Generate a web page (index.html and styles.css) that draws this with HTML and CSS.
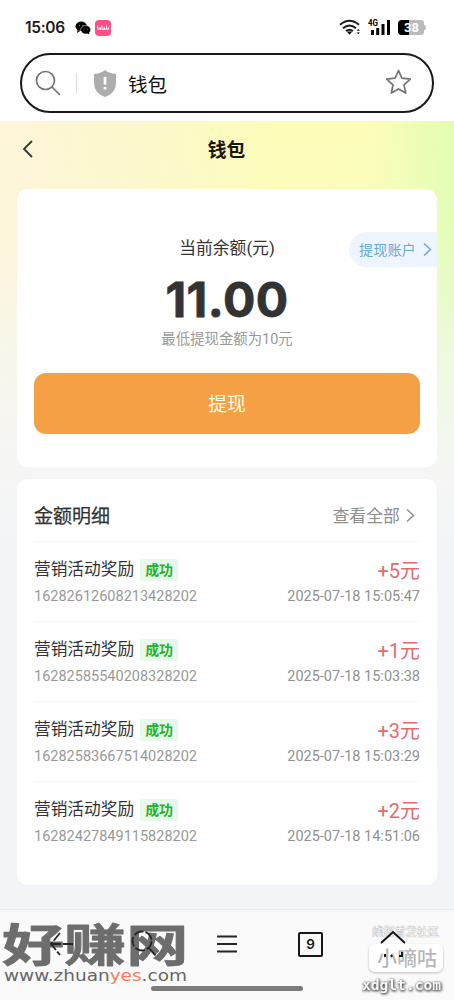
FILE: index.html
```html
<!DOCTYPE html>
<html lang="zh-CN">
<head>
<meta charset="utf-8">
<title>钱包</title>
<link rel="stylesheet" href="styles.css">
</head>
<body>
<div class="phone">
  <header class="browser">
    <div class="status">
      <span class="clock">15:06</span>
      <svg class="wechat" width="16" height="14" viewBox="0 0 16 14"><ellipse cx="6.2" cy="5.3" rx="5.7" ry="4.8"/><path d="M2.5 9L2 12l3-2z"/><ellipse cx="10.7" cy="8.8" rx="5" ry="4.2" stroke="#fff" stroke-width=".5"/><path d="M12 12l2 1.6.2-3z"/><g fill="#aaa"><circle cx="4.4" cy="4.3" r=".6"/><circle cx="8" cy="4.3" r=".6"/><circle cx="9" cy="8" r=".5"/><circle cx="12.3" cy="8" r=".5"/></g></svg>
      <span class="app"><svg width="12" height="6" viewBox="0 0 12 6"><path d="M.7.5v3.700h2.300V2.500v1.700h1.500M5 .5v3.700h2.300V2.500v1.700h1.500M9.500 .5v3.700h2V2.400"/></svg></span>
      <div class="signals">
        <svg width="22" height="17" viewBox="0 0 22 17"><g fill="none" stroke="#1b1b1b" stroke-width="1.9"><path d="M1 5.8Q10.500-2.200 20 5.800M4 9.200Q10.500 3.600 17 9.200M7 12Q10.500 9.300 14 12"/></g><path d="M7.700 12.600h5.600l-2.800 3.200z"/><path d="M17.800 11.700l1.500-1.700 1.500 1.700zM17.800 13.500l1.500 1.700 1.500-1.700z"/></svg>
        <svg class="bars" width="23" height="17" viewBox="0 0 23 17"><text x="0" y="7" textLength="10" lengthAdjust="spacingAndGlyphs">4G</text><path d="M3 11h3v5H3zM8.200 9h3v7h-3zM13.500 5h3v11h-3zM19 1h3v15h-3z"/></svg>
        <svg class="battery" width="28" height="15" viewBox="0 0 28 15"><path d="M4 0h19q3 0 3 3v1.500q2 1 2 3t-2 3V12q0 3-3 3H4q-4 0-4-4V4q0-4 4-4" fill="#bbb"/><path d="M4 0h7v15H4q-4 0-4-4V4q0-4 4-4" fill="#000"/><text x="6" y="12.200" textLength="15">38</text></svg>
      </div>
    </div>
    <div class="address">
      <svg class="glass" width="27" height="27" viewBox="0 0 27 27"><circle cx="10.500" cy="10.500" r="9"/><path d="M17 17l8 8"/></svg>
      <i class="sep"></i>
      <svg class="shield" width="24" height="27" viewBox="0 0 24 27"><path d="M12 0Q16 3.500 23 4v9q0 10-11 14Q1 23 1 13V4Q8 3.500 12 0" fill="#adadad"/><path d="M12 7v7.500M12 17v2.500" stroke="#fff" stroke-width="2.700"/></svg>
      <span class="site">钱包</span>
      <svg class="star" width="27" height="26" viewBox="0 0 27 26"><path d="M13.500 1.500l3.400 7.700 8.400.9-6.300 5.700 1.700 8.300-7.200-4.200-7.200 4.200L8 15.800 1.700 10.100l8.400-.9z"/></svg>
    </div>
  </header>

  <main class="wallet">
    <div class="titlebar">
      <svg class="back" width="12" height="20" viewBox="0 0 12 20"><path d="M10 2L2 10l8 8"/></svg>
      <h1>钱包</h1>
    </div>
    <section class="card balance">
      <div class="label">当前余额(元)</div>
      <a class="account"><span>提现账户</span><svg width="9" height="15" viewBox="0 0 9 15"><path d="M1 1.500l6.500 6L1 13.500"/></svg></a>
      <div class="amount">11.00</div>
      <div class="minimum">最低提现金额为10元</div>
      <button class="withdraw">提现</button>
    </section>
    <section class="card details">
      <div class="heading"><h2>金额明细</h2><a class="more"><span>查看全部</span><svg width="9" height="15" viewBox="0 0 9 15"><path d="M1 1.500l6.500 6L1 13.500"/></svg></a></div>
      <div class="entry">
        <div class="line"><span class="name">营销活动奖励</span><b class="tag">成功</b><span class="sum">+5元</span></div>
        <div class="meta"><span>16282612608213428202</span><time>2025-07-18 15:05:47</time></div>
      </div>
      <div class="entry">
        <div class="line"><span class="name">营销活动奖励</span><b class="tag">成功</b><span class="sum">+1元</span></div>
        <div class="meta"><span>16282585540208328202</span><time>2025-07-18 15:03:38</time></div>
      </div>
      <div class="entry">
        <div class="line"><span class="name">营销活动奖励</span><b class="tag">成功</b><span class="sum">+3元</span></div>
        <div class="meta"><span>16282583667514028202</span><time>2025-07-18 15:03:29</time></div>
      </div>
      <div class="entry">
        <div class="line"><span class="name">营销活动奖励</span><b class="tag">成功</b><span class="sum">+2元</span></div>
        <div class="meta"><span>16282427849115828202</span><time>2025-07-18 14:51:06</time></div>
      </div>
    </section>
  </main>

  <nav class="toolbar">
    <div class="slot"></div>
    <div class="slot"></div>
    <div class="slot"><svg width="20" height="18" viewBox="0 0 20 18"><path d="M0 1.500h20M0 9h20M0 16.500h20"/></svg></div>
    <div class="slot"><span class="tabs">9</span></div>
    <div class="slot"></div>
    <i class="homebar"></i>
    <svg class="mark-left" width="192" height="66" viewBox="0 0 192 66">
      <text class="cn" transform="translate(2 41) scale(1.350 .98)" textLength="138" lengthAdjust="spacingAndGlyphs">好赚网</text>
      <text class="url" x="4" y="60" textLength="183" lengthAdjust="spacingAndGlyphs">www.zhuan<tspan>yes</tspan>.com</text>
      <g class="tools"><path d="M51 23h23M60 12L51 23l9 11M149 27l7 8"/><circle cx="142" cy="20" r="9.500"/></g>
    </svg>
    <svg class="mark-right" width="94" height="76" viewBox="0 0 94 76">
      <text class="community" x="12" y="19" textLength="67">线报首发社区</text>
      <path class="roof" d="M21 26L33 15l12 11"/>
      <rect x="9" y="27" width="74" height="28" rx="6"/>
      <text class="xdg" x="17" y="49" textLength="60">小嘀咕</text>
      <path class="roof" d="M25 37v3M31 38l1 2M42 35v4h-3"/>
      <text class="domain" x="2" y="73" textLength="79" lengthAdjust="spacingAndGlyphs">xdglt.com</text>
    </svg>
  </nav>
</div>
</body>
</html>
```
FILE: styles.css
```css
* { box-sizing: border-box; }
body { margin: 0; font-family: Roboto, "Noto Sans CJK SC", sans-serif; color: #333; }
.phone { width: 454px; height: 1000px; display: flex; flex-direction: column; overflow: hidden; background: #f3f4f7; }
svg { display: block; flex: none; }

.browser { height: 121px; background: #fefefe; flex: none; }
.status { height: 53px; padding: 2px 28px 0 25px; display: flex; align-items: center; }
.clock { font: 600 15.500px Inter, sans-serif; color: #1b1b1b; width: 50px; letter-spacing: -.3px; }
.app { width: 16px; height: 16px; margin-left: 4px; border-radius: 4px; background: #ff4f87; display: grid; place-items: center; }
.app path { fill: none; stroke: #fff; stroke-width: 1; }
.signals { margin-left: auto; display: flex; align-items: center; }
.signals > svg:first-child { margin-right: 2px; }
.bars { margin: 0 7px 0 5px; overflow: visible; }
.bars text { font: 700 9px Roboto, sans-serif; }
.battery text { font: 700 13px Roboto, sans-serif; fill: #fff; }
.address { width: 414px; height: 60px; margin-left: 20px; border: 2px solid #191919; border-radius: 30px; display: flex; align-items: center; padding: 0 20px 0 13px; }
.glass, .star { fill: none; stroke: #737373; stroke-width: 1.700; stroke-linejoin: round; }
.sep { width: 1px; height: 21px; background: #ddd; margin: 0 16px 0 14px; }
.site { font-size: 19.500px; color: #111; margin-left: 11px; }
.star { margin-left: auto; transform: translateY(-1px); }

.wallet { flex: 1; padding: 0 17px; background: linear-gradient(to bottom, rgba(245,246,244,0) 0, rgba(245,246,244,.1) 110px, rgba(245,246,244,.65) 230px, #f5f6f4 345px, #f3f4f7 440px), linear-gradient(92deg, #fff5d9 0%, #fcf8cb 30%, #fdfdb8 58%, #fbfdb9 78%, #dffeb0 96%); }
.titlebar { height: 68px; display: grid; grid-template-columns: 60px 1fr 60px; align-items: center; padding: 0 0 12px 5px; }
.back { fill: none; stroke: #333; stroke-width: 1.800; }
h1 { margin: 0; text-align: center; font-size: 18.800px; color: #17170d; transform: translate(-3px, -1px); }
.card { background: #fff; border-radius: 11px; }
.balance { height: 278px; padding: 47px 17px 0; display: flex; flex-direction: column; align-items: center; position: relative; }
.label { font-size: 16.800px; line-height: 25px; }
.account { position: absolute; right: 0; top: 43px; width: 88px; height: 35px; border-radius: 18px 0 0 18px; background: #eff5ff; color: #65a9d7; font-size: 14.200px; display: flex; align-items: center; justify-content: space-between; padding: 0 5px 0 10px; }
.account span, .more span { transform: translateY(-1px); }
.account svg, .more svg { fill: none; stroke: currentColor; stroke-width: 1.500; }
.amount { font: 700 48px/58px Inter, sans-serif; letter-spacing: .5px; margin-top: 10px; -webkit-text-stroke: .8px #333; }
.minimum { font-size: 14.400px; color: #999; line-height: 21px; }
.withdraw { align-self: stretch; height: 61px; margin-top: 23px; padding: 0 0 3px; border: 0; border-radius: 12px; background: #f5a045; color: #fffdec; font: 18.800px Roboto, "Noto Sans CJK SC", sans-serif; }
.details { height: 406px; margin-top: 12px; padding: 0 17px; }
.heading { height: 62px; padding-top: 10px; display: flex; align-items: center; justify-content: space-between; }
h2 { margin: 0; font-size: 19px; font-weight: 400; -webkit-text-stroke: .25px #333; transform: translateY(-1px); }
.more { display: flex; align-items: center; gap: 6px; padding-right: 5px; color: #8e8e8e; font-size: 16.900px; }
.entry { height: 80px; border-top: 1px solid #f7f7f7; padding-top: 14px; }
.line { height: 28px; display: flex; align-items: center; }
.name { font-size: 16.700px; line-height: 25px; transform: translateY(-1px); }
.tag { width: 38px; height: 22px; margin-left: 6px; background: #e9f8ed; color: #20b52a; font-size: 14px; line-height: 22px; text-align: center; border-radius: 2px; }
.sum { margin-left: auto; font-size: 20px; color: #e36c6e; transform: translateY(-1px); }
.meta { display: flex; justify-content: space-between; color: #999; font-size: 14.500px; line-height: 25px; }
.meta time { color: #919191; }

.toolbar { position: relative; height: 91px; flex: none; background: #fafafb; border-top: 1px solid #e8e9ec; display: grid; grid-template-columns: repeat(5, 83.500px); justify-content: center; padding: 21px 0 0; }
.slot { height: 26px; display: grid; place-items: center; fill: none; stroke: #252525; stroke-width: 2; }
.tabs { width: 25px; height: 25px; border: 2px solid #171717; border-radius: 2px; text-align: center; font: 600 13.500px/21px Inter, sans-serif; color: #171717; }
.homebar { position: absolute; left: 151px; top: 76px; width: 152px; height: 5px; border-radius: 3px; background: #7b7b7b; }
.mark-left { position: absolute; left: 0; top: 11px; overflow: visible; }
.cn { font: 700 46px "Noto Sans CJK SC", sans-serif; fill: #6d6d6d; stroke: #6d6d6d; stroke-width: .8; stroke-linejoin: round; }
.url { font: 16.500px "DejaVu Sans", sans-serif; fill: #666; }
.url tspan { fill: #ff7958; }
.tools { fill: none; stroke: #252525; stroke-width: 1.800; stroke-dasharray: 10 2; }
.mark-right { position: absolute; left: 360px; top: 7px; overflow: visible; }
.mark-right rect { fill: #fff; filter: drop-shadow(0 1px 1px #bbb); }
.community { font: 700 11px "Noto Sans CJK SC", sans-serif; fill: #fff; stroke: #ccc; stroke-width: .6; }
.roof { fill: none; stroke: #151515; stroke-width: 2; }
.xdg { font: 500 20px "Noto Sans CJK SC", sans-serif; fill: #b8b8b8; }
.domain { font: 700 14px "DejaVu Sans Mono", monospace; fill: #f7f7f7; filter: drop-shadow(0 1px 1px #555) drop-shadow(1px 0 1px #777); }
```
